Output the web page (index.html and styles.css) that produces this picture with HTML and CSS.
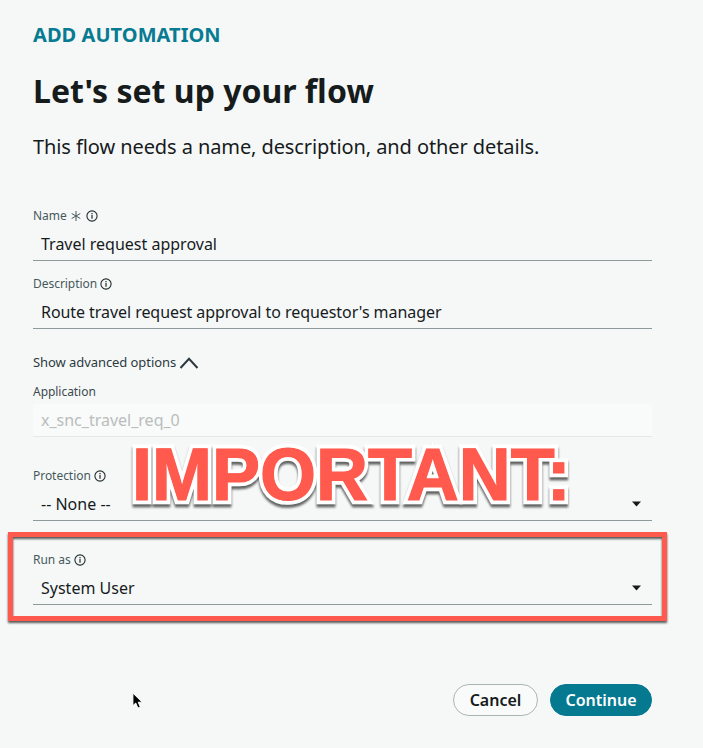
FILE: index.html
```html
<!DOCTYPE html>
<html lang="en">
<head>
<meta charset="utf-8">
<title>Add automation</title>
<link rel="stylesheet" href="styles.css">
</head>
<body>
<svg class="defs" width="0" height="0" aria-hidden="true">
  <symbol id="info" viewBox="0 0 12 12">
    <circle cx="6" cy="6" r="5.1" fill="none" stroke="currentColor" stroke-width="1.1"/>
    <path d="M5.4 5.1h1.2v3.6H5.4zM5.4 3.1h1.2v1.2H5.4z" fill="currentColor"/>
  </symbol>
  <symbol id="caret" viewBox="0 0 9 5"><path d="M0 0h9L4.5 5z" fill="currentColor"/></symbol>
</svg>
<main class="page">
  <div class="eyebrow">ADD AUTOMATION</div>
  <h1>Let's set up your flow</h1>
  <p class="intro">This flow needs a name, description, and other details.</p>

  <form class="form">
    <section class="field">
      <div class="label"><span>Name</span>
        <svg class="star" viewBox="0 0 10 10"><path d="M5 0v10M.7 2.5l8.6 5M.7 7.5l8.6-5" fill="none" stroke="currentColor" stroke-width="1"/></svg>
        <svg class="info"><use href="#info"/></svg></div>
      <div class="value"><span>Travel request approval</span></div>
    </section>
    <section class="field">
      <div class="label"><span>Description</span><svg class="info"><use href="#info"/></svg></div>
      <div class="value"><span class="desc-text">Route travel request approval to requestor's manager</span></div>
    </section>
    <div class="advanced"><span>Show advanced options</span>
      <svg class="chevron" viewBox="0 0 20 12"><path d="M1.5 11L10 1.8L18.5 11" fill="none" stroke="currentColor" stroke-width="2"/></svg></div>
    <section class="field application">
      <div class="label"><span>Application</span></div>
      <div class="value disabled"><span>x_snc_travel_req_0</span></div>
    </section>
    <section class="field protection">
      <div class="label"><span>Protection</span><svg class="info"><use href="#info"/></svg></div>
      <div class="value"><span>-- None --</span><svg class="caret"><use href="#caret"/></svg></div>
      <div class="callout">IMPORTANT:</div>
    </section>
    <section class="field run-as">
      <div class="label"><span>Run as</span><svg class="info"><use href="#info"/></svg></div>
      <div class="value"><span>System User</span><svg class="caret"><use href="#caret"/></svg></div>
      <div class="highlight"></div>
    </section>
    <div class="actions">
      <button type="button" class="cancel">Cancel</button>
      <button type="button" class="continue">Continue</button>
    </div>
  </form>
  <svg class="cursor" viewBox="0 0 13 19"><path d="M1 1v13.5l3.1-2.8 2.3 5.4 2.6-1.1-2.3-5.2H11z" fill="#000" stroke="#fff" stroke-width="1"/></svg>
</main>
</body>
</html>
```
FILE: styles.css
```css
* { box-sizing: border-box; }
body { margin: 0; background: #f6f8f8; color: #161b1c; font-family: "Noto Sans", sans-serif; }
.defs { position: absolute; }
.page { position: relative; width: 703px; height: 748px; padding: 21px 51px 0 33px; overflow: hidden; }
.eyebrow { height: 28px; line-height: 28px; font-size: 20px; font-weight: 700; letter-spacing: .05px; color: #077b91; white-space: nowrap; }
h1 { margin: 19px 0 0; height: 46px; line-height: 46px; font-size: 32px; font-weight: 700; white-space: nowrap; }
.intro { margin: 18px 0 0; height: 30px; line-height: 30px; font-size: 20px; letter-spacing: -.09px; white-space: nowrap; }
.form { margin-top: 44px; }
.field { position: relative; height: 68px; }
.label { display: flex; align-items: center; height: 19px; font-size: 12px; line-height: 19px; letter-spacing: -.04px; color: #47585c; }
.info { width: 12px; height: 12px; margin-left: 3px; color: #202b2d; }
.star { width: 10px; height: 10px; margin-left: 4px; }
.star + .info { margin-left: 5px; }
.value { display: flex; align-items: center; justify-content: space-between; height: 33px; margin-top: 3px; padding: 0 11px 0 8px; border-bottom: 1px solid #8d9a9c; font-size: 16px; white-space: nowrap; }
.desc-text { letter-spacing: -.06px; }
.advanced { display: flex; align-items: center; height: 20px; margin-top: 10px; font-size: 13px; letter-spacing: -.07px; color: #2c3a40; }
.chevron { width: 20px; height: 12px; margin: 2px 0 0 3px; }
.application { height: 93px; padding-top: 9px; margin-top: 1px; }
.application .label { color: #3d4a4e; }
.disabled { background: #f9fafa; border-color: #e4e7e7; color: #b9bdbd; }
.protection { height: 84px; }
.caret { width: 9px; height: 6px; }
.callout, .callout::after { font: 700 72px/96px "Liberation Sans", sans-serif; color: #ff5a4d; white-space: nowrap; }
.callout { position: absolute; left: 99px; top: -40.5px; -webkit-text-stroke: 8.5px #fff; stroke-linejoin: round; paint-order: stroke fill; filter: drop-shadow(0 3px 1px rgba(0,0,0,.6)); transform: scaleY(1.02); }
.callout::after { content: "IMPORTANT:"; position: absolute; left: 0; top: 0; -webkit-text-stroke: 1.2px #ff5a4d; }
.highlight { position: absolute; left: -25px; top: -18px; width: 659px; height: 89px; border: 5px solid #ff5a4d; filter: drop-shadow(0 2px 1px rgba(0,0,0,.65)); }
.actions { display: flex; justify-content: flex-end; gap: 12px; margin-top: 66px; }
button { height: 32px; padding: 0; border-radius: 16px; font: 600 16px/30px "Noto Sans", sans-serif; }
.cancel { width: 85px; background: #f9fafa; border: 1px solid #aab5b6; color: #161b1c; }
.continue { width: 102px; background: #057990; border: 1px solid #057990; color: #fff; }
.cursor { position: absolute; left: 132px; top: 692px; width: 12px; height: 18px; }
```
